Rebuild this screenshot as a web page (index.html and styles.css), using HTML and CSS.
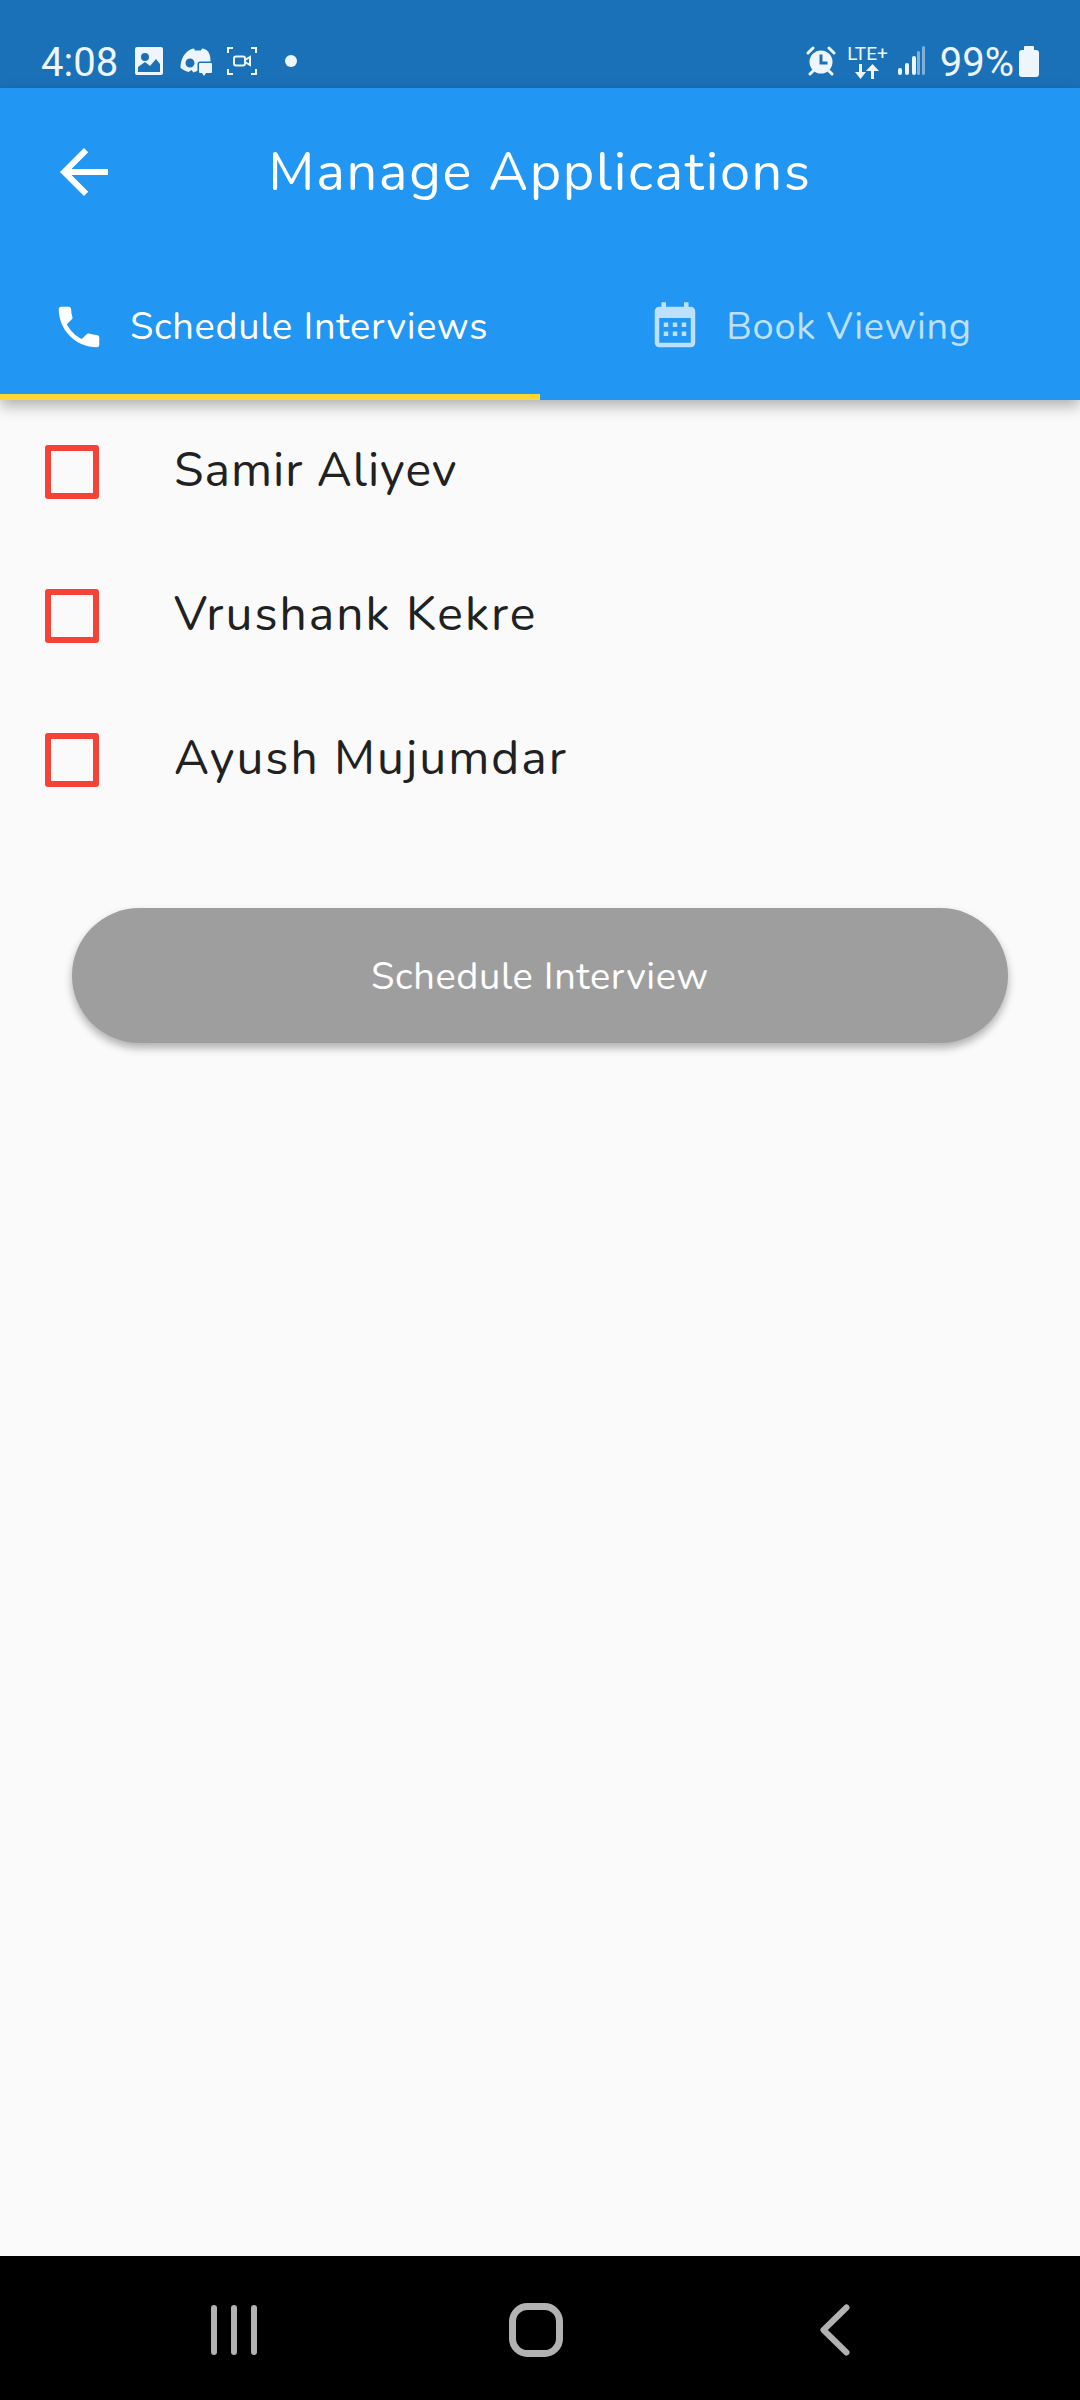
FILE: index.html
```html
<!DOCTYPE html>
<html>
  <head>
    <meta charset="UTF-8" />
    <title>Manage Applications</title>
    <link rel="stylesheet" href="styles.css">
  </head>
  <body>
    <div class="phone">
      <div class="status-bar">
        <div class="status-left">
          <span class="clock">4:08</span>
          <svg class="icon-gallery" width="28" height="28" viewBox="0 0 28 28"><path fill="#eef5fc" fill-rule="evenodd" d="M2 0h24a2 2 0 0 1 2 2v24a2 2 0 0 1-2 2H2a2 2 0 0 1-2-2V2a2 2 0 0 1 2-2zM3 25h22v-8l-4-5-6 7-5-4-7 5zM10 6a4 4 0 1 0 0 8 4 4 0 0 0 0-8z"/></svg>
          <svg class="icon-discord" width="32" height="29" viewBox="0 0 32 29"><path fill="#eef5fc" fill-rule="evenodd" d="M8 3c2-1.500 4-2.500 6-2.500l1 2h6l1-2c2.500.3 4.500 1.300 6 3 1.500 2 2.500 5 2.500 8.500v6l-9 3-8 3.500-2-2.500-3 2c-3-1-6-2.500-8-4 0-6 2-13 7.500-17zM10 10.500a4.500 4.500 0 1 0 0 9 4.500 4.500 0 0 0 0-9z"/><path fill="#eef5fc" stroke="#1b71b8" stroke-width="3" paint-order="stroke" d="M20 15h11a1 1 0 0 1 1 1v8a1 1 0 0 1-1 1h-5l-2 3-2-3h-2a1 1 0 0 1-1-1v-8a1 1 0 0 1 1-1z"/></svg>
          <svg class="icon-record" width="30" height="28" viewBox="0 0 30 28" fill="none" stroke="#eef5fc" stroke-width="2"><path d="M1 6V1h5M24 1h5v5M29 22v5h-5M6 27H1v-5"/><rect x="7" y="9.500" width="11" height="9" rx="2"/><path d="M18 13l5-3v8l-5-3"/></svg>
          <span class="dot"></span>
        </div>
        <div class="status-right">
          <svg width="30" height="30" viewBox="0 0 30 30"><circle cx="15" cy="16" r="11.500" fill="#eef5fc"/><path d="M13.500 8.500h3v7h5v3h-8z" fill="#1b71b8"/><path d="M2 7l5-5M28 7l-5-5M4 28l3-3M26 28l-3-3" stroke="#eef5fc" stroke-width="3" stroke-linecap="round"/></svg>
          <div class="lte">
            <span class="lte-text">LTE+</span>
            <svg width="26" height="15" viewBox="0 0 26 15"><path fill="#eef5fc" d="M5 0h3v8h4l-5.500 7L1 8h4zM17 15h3V7h5l-6.500-7L12 7h5z"/></svg>
          </div>
          <svg width="27" height="30" viewBox="0 0 27 30"><rect x="0" y="22" width="4" height="7" rx="2" fill="#eef5fc"/><rect x="7" y="17" width="4" height="12" rx="2" fill="#eef5fc"/><rect x="14" y="10" width="4" height="19" rx="2" fill="#eef5fc"/><rect x="19" y="5" width="3" height="24" rx="1.500" fill="#7fb0da"/><rect x="24" y="0" width="3" height="29" rx="1.500" fill="#7fb0da"/></svg>
          <span class="battery-pct">99%</span>
          <svg width="20" height="31" viewBox="0 0 20 31"><path fill="#eef5fc" d="M6 0h8a1 1 0 0 1 1 1v3h2a3 3 0 0 1 3 3v21a3 3 0 0 1-3 3H3a3 3 0 0 1-3-3V7a3 3 0 0 1 3-3h2V1a1 1 0 0 1 1-1z"/></svg>
        </div>
      </div>

      <header class="app-bar">
        <div class="title-row">
          <svg width="72" height="72" viewBox="0 0 24 24"><path fill="#fff" d="M20 11H7.830l5.590-5.590L12 4l-8 8 8 8 1.410-1.410L7.830 13H20v-2z"/></svg>
          <h1 class="title">Manage Applications</h1>
        </div>
        <div class="tabs">
          <div class="tab tab-active">
            <svg width="54" height="54" viewBox="0 0 24 24"><path fill="#fff" d="M6.620 10.790c1.440 2.830 3.760 5.140 6.590 6.590l2.200-2.200c.27-.27.67-.36 1.020-.24 1.120.37 2.330.57 3.570.57.55 0 1 .45 1 1V20c0 .55-.45 1-1 1-9.390 0-17-7.610-17-17 0-.55.45-1 1-1h3.500c.55 0 1 .45 1 1 0 1.250.2 2.450.57 3.570.11.35.03.74-.25 1.020l-2.200 2.200z"/></svg>
            <span>Schedule Interviews</span>
          </div>
          <div class="tab">
            <svg width="54" height="54" viewBox="0 0 24 24"><path fill="#bde0fd" fill-rule="evenodd" d="M19 3h-1V1h-2v2H8V1H6v2H5C3.890 3 3 3.900 3 5v14c0 1.100.89 2 2 2h14c1.100 0 2-.9 2-2V5c0-1.100-.9-2-2-2zm0 16H5V8h14v11zM7 10h2v2H7zm4 0h2v2h-2zm4 0h2v2h-2zM7 14h2v2H7zm4 0h2v2h-2zm4 0h2v2h-2z"/></svg>
            <span>Book Viewing</span>
          </div>
        </div>
      </header>

      <main class="content">
        <ul class="applicants">
          <li class="applicant"><span class="checkbox"></span><span class="name">Samir Aliyev</span></li>
          <li class="applicant"><span class="checkbox"></span><span class="name name-wide">Vrushank Kekre</span></li>
          <li class="applicant"><span class="checkbox"></span><span class="name name-wide">Ayush Mujumdar</span></li>
        </ul>
        <button class="schedule-btn">Schedule Interview</button>
      </main>

      <div class="nav-bar">
        <svg width="46" height="50" viewBox="0 0 46 50"><rect x="0" y="0" width="6" height="50" rx="3" fill="#b2b2b2"/><rect x="20" y="0" width="6" height="50" rx="3" fill="#b2b2b2"/><rect x="40" y="0" width="6" height="50" rx="3" fill="#b2b2b2"/></svg>
        <svg class="nav-home" width="54" height="54" viewBox="0 0 54 54"><rect x="3.500" y="3.500" width="47" height="47" rx="15" fill="none" stroke="#b2b2b2" stroke-width="7"/></svg>
        <svg class="nav-back" width="30" height="52" viewBox="0 0 30 52"><path d="M26.500 3.500L3.500 26l23 22.500" fill="none" stroke="#b2b2b2" stroke-width="6" stroke-linecap="round" stroke-linejoin="round"/></svg>
      </div>
    </div>
  </body>
</html>
```

FILE: styles.css
```css
* {
  box-sizing: border-box;
}
body {
  margin: 0;
  font-family: "Nunito", "Lato", "Noto Sans", sans-serif;
}
.phone {
  width: 1080px;
  height: 2400px;
  display: flex;
  flex-direction: column;
  background-color: #fafafa;
  overflow: hidden;
}

/* status bar */
.status-bar {
  height: 88px;
  flex-shrink: 0;
  background-color: #1b71b8;
  color: #eef5fc;
  display: flex;
  justify-content: space-between;
  padding: 44px 41px 10px 41px;
}
.status-left,
.status-right {
  display: flex;
  align-items: center;
}
.clock,
.battery-pct {
  font-family: Roboto, sans-serif;
  font-size: 40px;
  line-height: 34px;
  padding-top: 3px;
}
.icon-gallery {
  margin-left: 17px;
}
.icon-discord {
  margin: 3px 0 0 17px;
}
.icon-record {
  margin-left: 15px;
}
.dot {
  width: 12px;
  height: 12px;
  margin-left: 28px;
  border-radius: 50%;
  background-color: #eef5fc;
}
.lte {
  display: flex;
  flex-direction: column;
  align-items: center;
  margin: 0 10px 0 11px;
}
.lte-text {
  font-family: Roboto, sans-serif;
  font-size: 19px;
  line-height: 20px;
}
.battery-pct {
  margin: 0 5px 0 15px;
}

/* app bar */
.app-bar {
  height: 312px;
  flex-shrink: 0;
  background-color: #2196f3;
  box-shadow: 0 6px 14px rgba(0, 0, 0, 0.3);
  display: flex;
  flex-direction: column;
}
.title-row {
  height: 168px;
  display: grid;
  grid-template-columns: 1fr auto 1fr;
  align-items: center;
  padding: 0 48px;
}
.title {
  margin: 0;
  color: white;
  font-size: 54px;
  font-weight: 400;
  letter-spacing: 1.7px;
}
.tabs {
  flex: 1;
  display: flex;
}
.tab {
  flex: 1;
  display: flex;
  align-items: center;
  justify-content: center;
  gap: 24px;
  font-size: 38px;
  letter-spacing: 0.7px;
  color: #bde0fd;
  padding-top: 3px;
  border-bottom: 6px solid transparent;
}
.tab-active {
  color: white;
  border-bottom-color: #fdd835;
}

/* list */
.content {
  flex: 1;
}
.applicants {
  list-style: none;
  margin: 0;
  padding: 0;
}
.applicant {
  height: 144px;
  display: flex;
  align-items: center;
  padding-left: 45px;
}
.checkbox {
  width: 54px;
  height: 54px;
  border: 6px solid #f44336;
  border-radius: 3px;
  flex-shrink: 0;
}
.name {
  margin: 0 0 4px 75px;
  font-size: 48px;
  letter-spacing: 1px;
  color: #212121;
}
.name-wide {
  letter-spacing: 2px;
}
.schedule-btn {
  display: block;
  width: 936px;
  height: 135px;
  margin: 76px 0 0 72px;
  padding-top: 3px;
  border: none;
  border-radius: 68px;
  background-color: #9e9e9e;
  color: white;
  font-family: inherit;
  font-size: 38px;
  letter-spacing: 0.6px;
  box-shadow: 0 5px 8px rgba(0, 0, 0, 0.3);
}

/* nav bar */
.nav-bar {
  height: 144px;
  flex-shrink: 0;
  background-color: black;
  display: flex;
  align-items: center;
  padding: 3px 0 0 211px;
}
.nav-home {
  margin-left: 252px;
}
.nav-back {
  margin-left: 257px;
}
```
